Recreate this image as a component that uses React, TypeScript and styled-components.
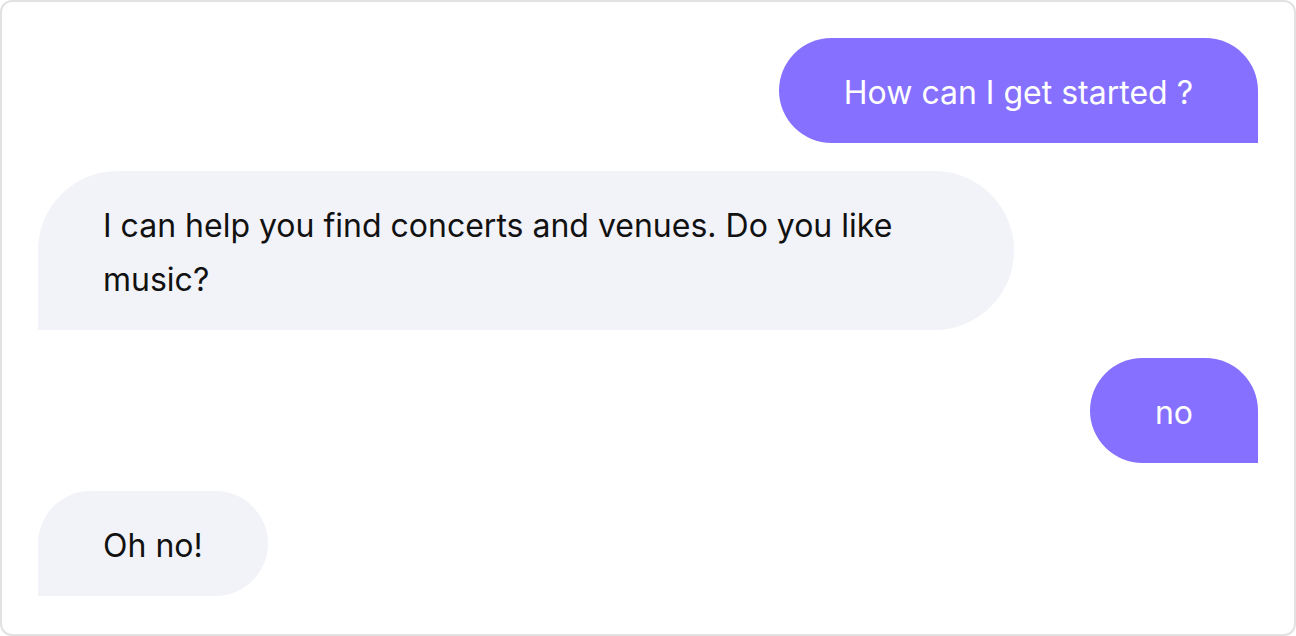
import styled, { createGlobalStyle } from 'styled-components';

const GlobalStyle = createGlobalStyle`
  html, body {
    margin: 0;
    padding: 0;
    background: #ffffff;
  }
  * {
    box-sizing: border-box;
  }
`;

const ChatWindow = styled.div`
  width: 1296px;
  height: 636px;
  border: 2px solid #e2e2e2;
  border-radius: 12px;
  padding: 36px 36px;
  display: flex;
  flex-direction: column;
  gap: 28px;
  background: #ffffff;
  font-family: Inter, 'Noto Sans', sans-serif;
`;

const Row = styled.div<{ $fromUser: boolean }>`
  display: flex;
  justify-content: ${p => (p.$fromUser ? 'flex-end' : 'flex-start')};
`;

const Bubble = styled.div<{ $fromUser: boolean }>`
  max-width: 80%;
  padding: 28px 65px 23px;
  font-size: 32px;
  line-height: 54px;
  border-radius: 80px;
  background: ${p => (p.$fromUser ? '#8670ff' : '#f2f3f8')};
  color: ${p => (p.$fromUser ? '#ffffff' : '#111111')};
  ${p => (p.$fromUser ? 'border-bottom-right-radius: 0;' : 'border-bottom-left-radius: 0;')}
`;

const messages = [
  { id: 1, fromUser: true, text: 'How can I get started ?' },
  { id: 2, fromUser: false, text: 'I can help you find concerts and venues. Do you like music?' },
  { id: 3, fromUser: true, text: 'no' },
  { id: 4, fromUser: false, text: 'Oh no!' },
];

export default function App() {
  return (
    <>
      <GlobalStyle />
      <ChatWindow>
        {messages.map(m => (
          <Row key={m.id} $fromUser={m.fromUser}>
            <Bubble $fromUser={m.fromUser}>{m.text}</Bubble>
          </Row>
        ))}
      </ChatWindow>
    </>
  );
}
